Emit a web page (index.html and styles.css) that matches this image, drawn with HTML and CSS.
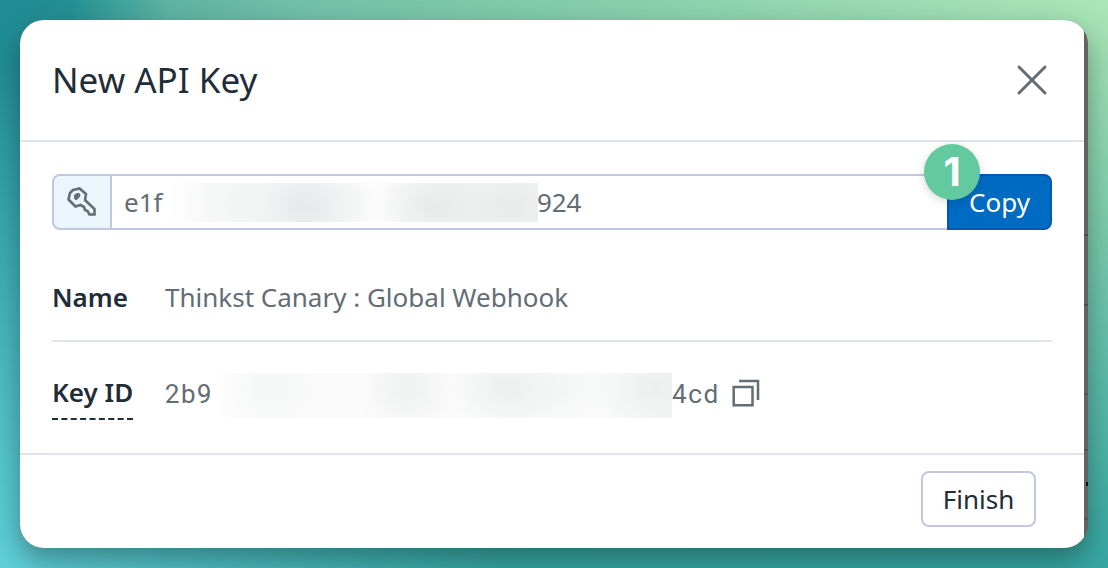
FILE: index.html
```html
<!DOCTYPE html>
<html lang="en">

<head>
    <meta charset="UTF-8">
    <meta name="viewport" content="width=device-width, initial-scale=1.0">
    <title>New API Key</title>
    <link rel="stylesheet" href="styles.css">
</head>

<body>
    <div class="window">
        <main class="modal">
            <header class="modal-header">
                <h1>New API Key</h1>
                <button type="button" class="close" aria-label="Close">
                    <svg width="32" height="32" viewBox="0 0 32 32">
                        <path d="M3 3L29 29M29 3L3 29" />
                    </svg>
                </button>
            </header>

            <div class="modal-body">
                <div class="key-row">
                    <label class="key-icon" for="apiKey" aria-label="API key">
                        <svg width="32" height="32" viewBox="0 0 32 32">
                            <path class="outline" d="M7 4L13.500 2.500L20 8L19 14L28.500 23V28.500H23.500L21.500 25L19 24L18 21L14.500 19L9.500 20.500L2.500 13.500L4 7Z" stroke-width="2.600" />
                            <path class="hole" d="M8.500 9L11 7.500L14 8L13.500 11L10 14L8.500 12.500Z" />
                        </svg>
                    </label>
                    <div class="key-field">
                        <input type="text" id="apiKey" readonly value="e1f                                                       &#8202;924">
                        <span class="redacted key-mask"></span>
                    </div>
                    <div class="copy-wrap">
                        <button type="button" class="copy">Copy</button>
                        <span class="badge">1</span>
                    </div>
                </div>

                <dl class="details">
                    <div class="detail">
                        <dt>Name</dt>
                        <dd>Thinkst Canary : Global Webhook</dd>
                    </div>
                    <div class="detail">
                        <dt><span class="hint">Key ID</span></dt>
                        <dd class="key-id">
                            <span>2b9</span>
                            <span class="redacted id-mask"></span>
                            <span>4cd</span>
                            <button type="button" class="copy-id" aria-label="Copy key ID">
                                <svg width="28" height="28" viewBox="0 0 28 28">
                                    <path d="M1.700 8H20.500V26.200H1.700ZM7 2H26V21" stroke-width="2.500" />
                                </svg>
                            </button>
                        </dd>
                    </div>
                </dl>
            </div>

            <footer class="modal-footer">
                <button type="button" class="finish">Finish</button>
            </footer>
        </main>
    </div>
</body>

</html>
```

FILE: styles.css
```css
* {
    box-sizing: border-box;
}

body {
    margin: 0;
    padding: 20px;
    min-height: 100vh;
    font-family: "Noto Sans", sans-serif;
    font-size: 26px;
    line-height: 36px;
    color: #1f2d38;
    background:
        radial-gradient(circle at 0 100%, #5fd0d9 0, rgba(95, 208, 217, 0) 500px),
        linear-gradient(to bottom, rgba(53, 166, 162, 0) 0, #35a6a2 100%),
        linear-gradient(to right, #1f8a93 0, #239094 70px, #5eb4a2 170px, #73c0a8 300px, #abe6b5 100%);
}

button {
    font: inherit;
    cursor: pointer;
}

svg {
    display: block;
    fill: none;
    stroke: #626d76;
}

.window {
    padding-right: 4px;
    border-radius: 24px;
    overflow: hidden;
    background:
        linear-gradient(#4c4e53, #4c4e53) right 214px / 4px 2px no-repeat,
        linear-gradient(#4c4e53, #4c4e53) right 284px / 4px 2px no-repeat,
        linear-gradient(#545454, #545454) right 373px / 4px 2px no-repeat,
        linear-gradient(#545454, #545454) right 429px / 4px 2px no-repeat,
        linear-gradient(#111, #111) right 462px / 2px 4px no-repeat,
        linear-gradient(#545454, #545454) right 498px / 4px 2px no-repeat,
        #636363;
    box-shadow: 0 12px 28px rgba(0, 0, 0, 0.34);
}

.modal {
    background-color: #fff;
}

.modal-header {
    display: flex;
    align-items: center;
    justify-content: space-between;
    height: 122px;
    padding: 0 36px 0 32px;
    border-bottom: 2px solid #e1e4ee;
}

h1 {
    margin: 0;
    font-size: 35px;
    font-weight: 400;
    line-height: 48px;
}

.close {
    padding: 0;
    border: none;
    background: none;
}

.close svg {
    stroke-width: 3;
    stroke-linecap: round;
}

.modal-body {
    padding: 32px;
}

.key-row {
    display: flex;
    height: 56px;
    color: #626d76;
}

.key-icon {
    display: flex;
    align-items: center;
    justify-content: center;
    width: 60px;
    border: 2px solid #c1c7e0;
    border-radius: 8px 0 0 8px;
    background-color: #eaf5fc;
}

.key-icon .hole {
    fill: #626d76;
    stroke-width: 1;
}

.key-field {
    position: relative;
    flex: 1;
}

.key-field input {
    width: 100%;
    height: 56px;
    padding: 0 12px;
    border: 2px solid #c1c7e0;
    border-width: 2px 0;
    font: inherit;
    color: inherit;
    background-color: #fff;
    outline: none;
}

/* blurred strip over the secret part */
.redacted {
    background-color: #fcfcfc;
}

.key-mask {
    position: absolute;
    top: 9px;
    left: 52px;
    width: 374px;
    height: 39px;
    background:
        radial-gradient(ellipse 60px 50px at 75px 50%, #f3f4f4, transparent),
        radial-gradient(ellipse 80px 54px at 138px 60%, #e6e8e9, transparent),
        radial-gradient(ellipse 60px 50px at 270px 60%, #e8eaea, transparent),
        radial-gradient(ellipse 80px 54px at 345px 60%, #e9ebeb, transparent),
        linear-gradient(to right, #fff, #f9f9f9 50px, #f9f9f9 150px, #fdfdfd 210px, #f6f6f6 270px, #f3f3f3);
}

.copy-wrap {
    position: relative;
}

.copy {
    width: 105px;
    height: 56px;
    padding: 0;
    border: 2px solid #0655b8;
    border-radius: 0 8px 8px 0;
    color: #fff;
    background-color: #006bc2;
}

.badge {
    position: absolute;
    top: -30px;
    left: -23px;
    width: 56px;
    height: 56px;
    border-radius: 50%;
    font-family: Inter, sans-serif;
    font-size: 40px;
    font-weight: 700;
    line-height: 56px;
    text-align: center;
    color: #fff;
    background-color: #63caa0;
    box-shadow: 0 2px 10px rgba(0, 0, 0, 0.16);
}

.details {
    margin: 24px 0 0;
}

.detail {
    display: grid;
    grid-template-columns: 113px 1fr;
    padding: 25px 0;
}

.detail + .detail {
    padding: 32px 0 0;
    border-top: 2px solid #e1e4ee;
}

dt {
    font-weight: 600;
}

dd {
    margin: 0;
    color: #626d76;
}

.hint {
    display: block;
    width: fit-content;
    padding-bottom: 8px;
    border-bottom: 2px dashed #1f2d38;
    margin-bottom: 1px;
}

.key-id {
    display: flex;
    align-items: center;
    height: 38px;
    font-family: "Roboto Mono", Roboto, sans-serif;
}

.id-mask {
    width: 460px;
    height: 45px;
    margin-top: 4px;
    background:
        radial-gradient(ellipse 60px 50px at 60px 35%, #f5f6f6, transparent),
        radial-gradient(ellipse 50px 50px at 195px 32%, #eff0f0, transparent),
        radial-gradient(ellipse 60px 50px at 295px 32%, #edefef, transparent),
        radial-gradient(ellipse 60px 46px at 345px 32%, #f4f5f5, transparent),
        radial-gradient(ellipse 70px 60px at 445px 32%, #edefef, transparent),
        linear-gradient(to right, #fff, #fbfbfb 50px, #fbfbfb 400px, #f6f6f6);
}

.copy-id {
    margin-left: 13px;
    padding: 0;
    border: none;
    background: none;
}

.modal-footer {
    display: flex;
    justify-content: flex-end;
    padding: 16px 48px 21px;
    border-top: 2px solid #e1e4ee;
}

.finish {
    width: 115px;
    height: 56px;
    padding: 0;
    border: 2px solid #c1c7e0;
    border-radius: 8px;
    color: #1f2d38;
    background-color: #fff;
}
```
